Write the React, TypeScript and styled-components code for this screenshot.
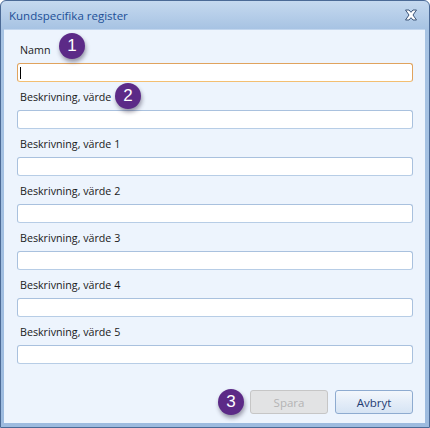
import styled, { createGlobalStyle } from "styled-components";

const GlobalStyle = createGlobalStyle`
  html, body {
    margin: 0;
    padding: 0;
    background: #ffffff;
  }
  body {
    font-family: "Open Sans", "Noto Sans", "Liberation Sans", sans-serif;
  }
`;

const Window = styled.div`
  width: 430px;
  height: 428px;
  box-sizing: border-box;
  border: 1px solid #4b6a96;
  border-radius: 6px 6px 0 0;
  background: linear-gradient(to bottom, #c5d9ef 0px, #a7c3e3 28px, #9dbbdf 100%);
  display: flex;
  flex-direction: column;
  overflow: hidden;
`;

const TitleBar = styled.div`
  height: 28px;
  flex-shrink: 0;
  display: flex;
  align-items: center;
  justify-content: space-between;
  padding: 0 11px 0 8px;
`;

const Title = styled.div`
  font-size: 11.5px;
  color: #1c4f97;
`;

const CloseButton = styled.div`
  width: 14px;
  height: 14px;
  display: flex;
  align-items: center;
  justify-content: center;
`;

const Body = styled.div`
  flex: 1;
  margin: 0 4px 4px 3px;
  background: #edf4fd;
  border-top: 1px solid #c2d6ee;
  display: flex;
  flex-direction: column;
  padding: 10px 12px 0 13px;
`;

const Fields = styled.div`
  display: flex;
  flex-direction: column;
`;

const Field = styled.div<{ $top: number }>`
  display: flex;
  flex-direction: column;
  margin-top: ${(p) => p.$top}px;
`;

const LabelRow = styled.div`
  position: relative;
  height: 15px;
  display: flex;
  align-items: center;
`;

const Label = styled.span`
  font-size: 10.7px;
  color: #1a1a1a;
  padding-left: 3px;
`;

const Input = styled.div<{ $focus?: boolean }>`
  height: 19px;
  margin-top: 6px;
  box-sizing: border-box;
  background: #ffffff;
  border: 1px solid ${(p) => (p.$focus ? "#e0a35e" : "#a9c1de")};
  border-bottom-color: ${(p) => (p.$focus ? "#f3bf72" : "#b7cde6")};
  border-radius: 3px;
  display: flex;
  align-items: center;
  padding-left: 2px;
`;

const Caret = styled.span`
  width: 1px;
  height: 12px;
  background: #000000;
`;

const Badge = styled.div<{ $left: number; $top?: number }>`
  position: absolute;
  left: ${(p) => p.$left}px;
  top: ${(p) => p.$top ?? -6}px;
  width: 26px;
  height: 26px;
  border-radius: 50%;
  background: #5c2a87;
  box-shadow: 1px 3px 4px rgba(40, 30, 60, 0.45);
  color: #ffffff;
  font-family: "Liberation Sans", Arial, sans-serif;
  font-size: 17px;
  display: flex;
  align-items: center;
  justify-content: center;
`;

const Footer = styled.div`
  margin-top: auto;
  display: flex;
  align-items: center;
  justify-content: flex-end;
  gap: 7px;
  padding-bottom: 9px;
`;

const ButtonWrap = styled.div`
  position: relative;
`;

const Button = styled.div<{ $disabled?: boolean }>`
  width: 78px;
  height: 24px;
  box-sizing: border-box;
  border-radius: 3px;
  display: flex;
  align-items: center;
  justify-content: center;
  font-size: 11.5px;
  border: 1px solid ${(p) => (p.$disabled ? "#c6c6c6" : "#8eabd0")};
  background: ${(p) =>
    p.$disabled
      ? "#e2e3e4"
      : "linear-gradient(to bottom, #f3f7fc 0%, #e4edf8 50%, #d6e4f4 100%)"};
  color: ${(p) => (p.$disabled ? "#b4b4b4" : "#1f3b73")};
`;

const CloseIcon = () => (
  <svg width="14" height="12" viewBox="0 0 14 12">
    <path
      d="M1.5 1 L5 1 L7 3.3 L9 1 L12.5 1 L9 6 L12.5 11 L9 11 L7 8.7 L5 11 L1.5 11 L5 6 Z"
      fill="#ffffff"
      stroke="#3d5679"
      strokeWidth="1"
      strokeLinejoin="round"
    />
  </svg>
);

const rows = [
  "Beskrivning, värde 1",
  "Beskrivning, värde 2",
  "Beskrivning, värde 3",
  "Beskrivning, värde 4",
  "Beskrivning, värde 5",
];

export default function App() {
  return (
    <>
      <GlobalStyle />
      <Window>
        <TitleBar>
          <Title>Kundspecifika register</Title>
          <CloseButton>
            <CloseIcon />
          </CloseButton>
        </TitleBar>
        <Body>
          <Fields>
            <Field $top={2}>
              <LabelRow>
                <Label>Namn</Label>
                <Badge $left={42} $top={-9}>1</Badge>
              </LabelRow>
              <Input $focus>
                <Caret />
              </Input>
            </Field>
            <Field $top={7}>
              <LabelRow>
                <Label>Beskrivning, värde</Label>
                <Badge $left={98}>2</Badge>
              </LabelRow>
              <Input />
            </Field>
            {rows.map((r) => (
              <Field key={r} $top={7}>
                <LabelRow>
                  <Label>{r}</Label>
                </LabelRow>
                <Input />
              </Field>
            ))}
          </Fields>
          <Footer>
            <ButtonWrap>
              <Badge $left={-32} $top={-1}>3</Badge>
              <Button $disabled>Spara</Button>
            </ButtonWrap>
            <Button>Avbryt</Button>
          </Footer>
        </Body>
      </Window>
    </>
  );
}
